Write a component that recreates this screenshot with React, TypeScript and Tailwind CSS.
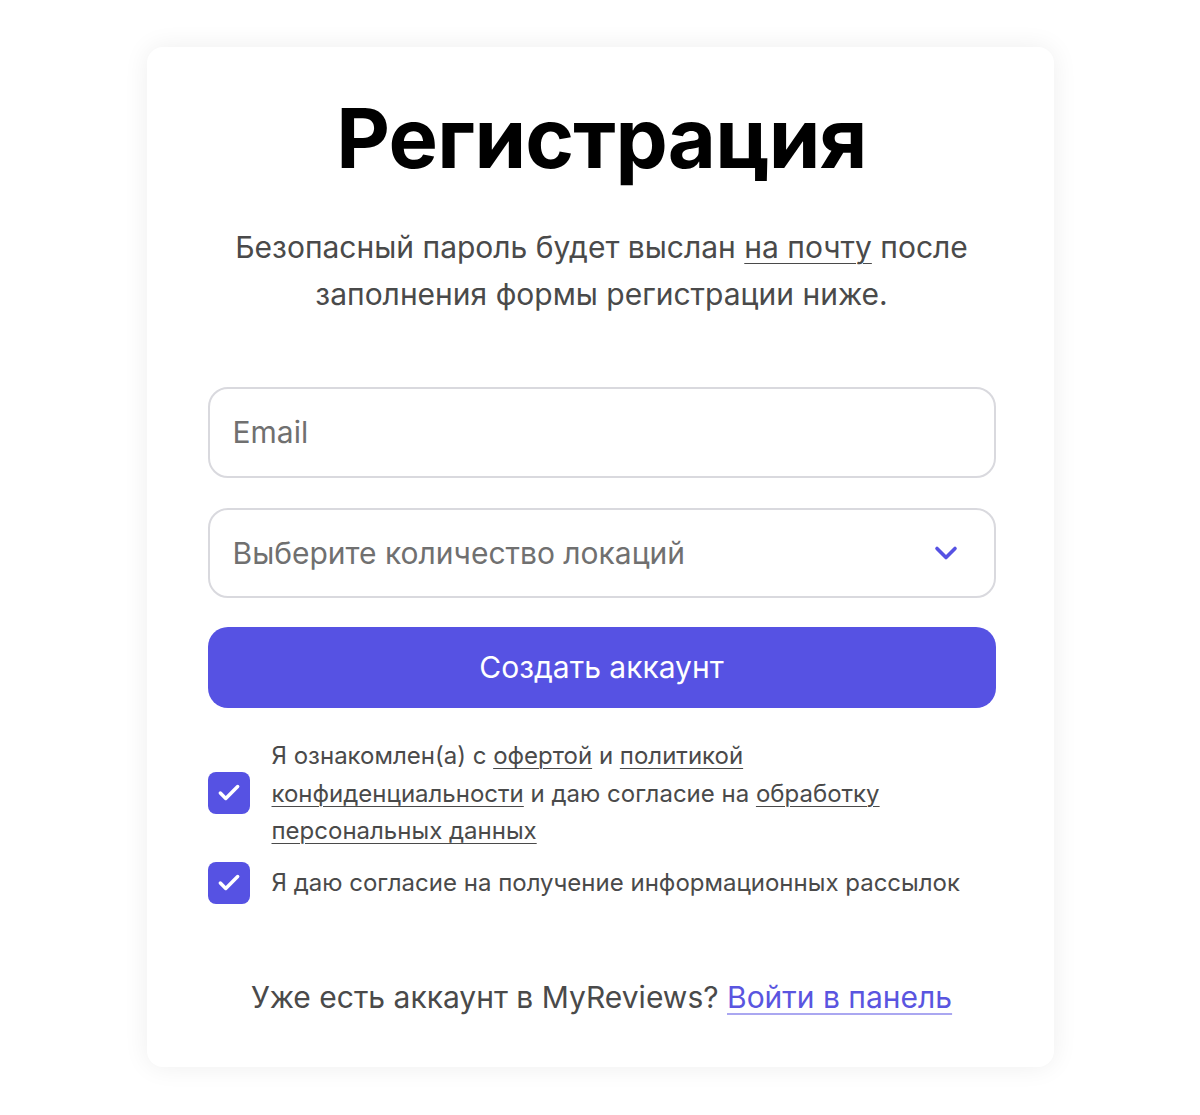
import { Check, ChevronDown } from "lucide-react";

const RegisterCard = () => {
  return (
    <div className="w-[907px] rounded-2xl bg-white pl-[61px] pr-[58px] pt-[41px] pb-[50px] shadow-[0_0_26px_rgba(0,0,0,0.07)]">
      {/* Title */}
      <h1 className="text-center text-[83px] font-bold leading-[100px] tracking-[-0.01em] text-black">
        Регистрация
      </h1>

      <p className="mx-auto mt-[36px] max-w-[770px] text-center text-[30px] leading-[47px] text-[#4a4a4a]">
        Безопасный пароль будет выслан{" "}
        <span className="underline decoration-1 underline-offset-[5px]">на почту</span> после
        заполнения формы регистрации ниже.
      </p>

      {/* Form */}
      <div className="mt-[69px] flex flex-col">
        <div className="flex h-[91px] items-center rounded-[20px] border-2 border-[#d9d9de] px-[23px]">
          <span className="text-[30px] text-[#707070]">Email</span>
        </div>

        <div className="mt-[30px] flex h-[90px] items-center justify-between rounded-[20px] border-2 border-[#d9d9de] pl-[23px] pr-[30px]">
          <span className="text-[30px] text-[#707070]">Выберите количество локаций</span>
          <ChevronDown className="h-9 w-9 text-[#5652e3]" strokeWidth={2.4} />
        </div>

        <button className="mt-[29px] flex h-[81px] items-center justify-center rounded-[20px] bg-[#5652e3] text-[30px] text-white">
          Создать аккаунт
        </button>

        {/* Agreements */}
        <div className="mt-[29px] flex items-center gap-[22px]">
          <div className="flex h-[42px] w-[42px] shrink-0 items-center justify-center rounded-lg bg-[#5652e3]">
            <Check className="h-[26px] w-[26px] text-white" strokeWidth={3.2} />
          </div>
          <p className="text-[24px] leading-[37.5px] text-[#4a4a4a]">
            Я ознакомлен(а) с{" "}
            <span className="underline decoration-1 underline-offset-[4px]">офертой</span> и{" "}
            <span className="underline decoration-1 underline-offset-[4px]">
              политикой конфиденциальности
            </span>{" "}
            и даю согласие на{" "}
            <span className="underline decoration-1 underline-offset-[4px]">
              обработку персональных данных
            </span>
          </p>
        </div>

        <div className="mt-[12px] flex items-center gap-[22px]">
          <div className="flex h-[42px] w-[42px] shrink-0 items-center justify-center rounded-lg bg-[#5652e3]">
            <Check className="h-[26px] w-[26px] text-white" strokeWidth={3.2} />
          </div>
          <p className="text-[24px] leading-[37.5px] text-[#4a4a4a]">
            Я даю согласие на получение информационных рассылок
          </p>
        </div>
      </div>

      <p className="mt-[73px] text-center text-[30px] leading-[40px] text-[#4a4a4a]">
        Уже есть аккаунт в MyReviews?{" "}
        <a
          href="#"
          className="text-[#5a55e0] underline decoration-[#aaa7f1] decoration-2 underline-offset-[5px]"
        >
          Войти в панель
        </a>
      </p>
    </div>
  );
};

export default function App() {
  return (
    <div
      className="flex min-h-screen items-start justify-center bg-white pt-[47px]"
      style={{ fontFamily: "Inter, 'Noto Sans', sans-serif" }}
    >
      <RegisterCard />
    </div>
  );
}
